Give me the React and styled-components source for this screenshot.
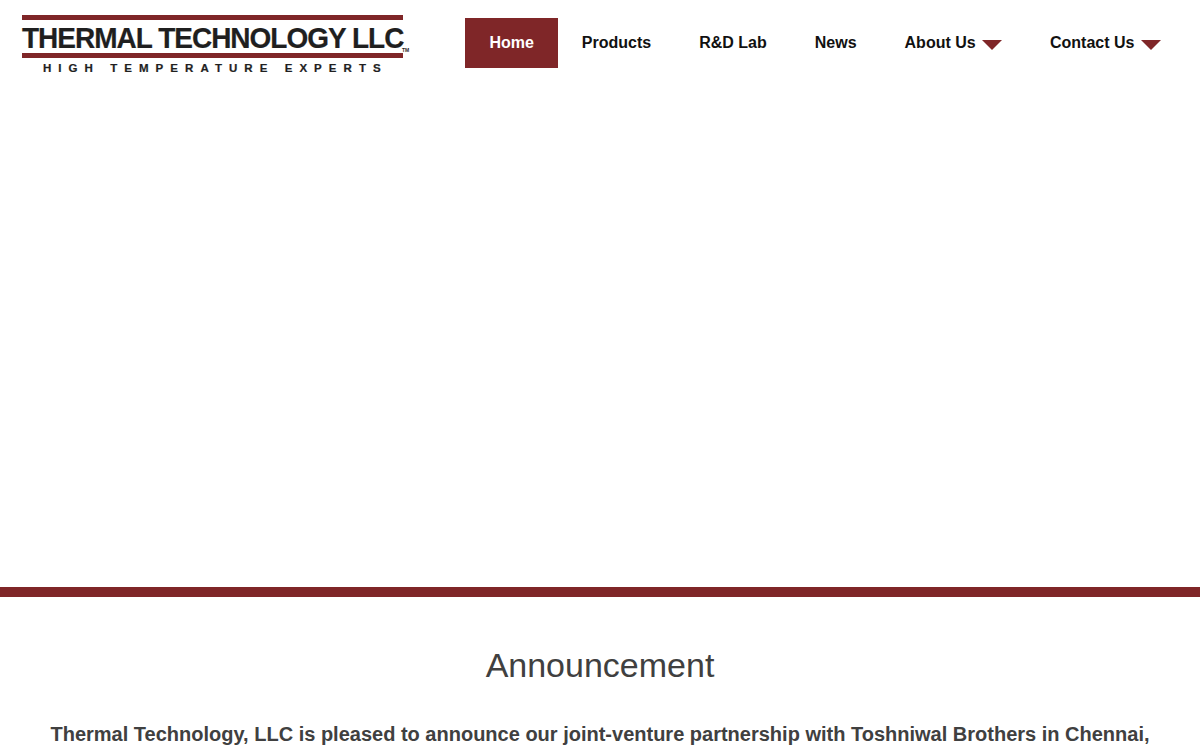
import React from "react";
import styled, { createGlobalStyle } from "styled-components";

const GlobalStyle = createGlobalStyle`
  html, body {
    margin: 0;
    padding: 0;
    background: #fff;
    font-family: "Liberation Sans", Arial, sans-serif;
  }
`;

const RED = "#7f2628";

const Header = styled.header`
  display: flex;
  align-items: flex-start;
  height: 587px;
  padding: 15px 0 0 22px;
  box-sizing: border-box;
`;

const Logo = styled.a`
  display: block;
  position: relative;
  width: 381px;
  margin-right: 62.4px;
  color: #1f1f1f;
  text-decoration: none;
`;

const LogoBar = styled.div`
  height: 5px;
  background: ${RED};
`;

const LogoName = styled.div`
  height: 33px;
  line-height: 36px;
  font-size: 28px;
  font-weight: 700;
  letter-spacing: -1px;
  white-space: nowrap;
  transform: scaleY(1.05);
  -webkit-text-stroke: 0.2px #1f1f1f;
`;

// extended letters, as in the logo artwork
const LogoTagline = styled.div`
  margin: 5px 0 0 21px;
  font-size: 10px;
  line-height: 11px;
  font-weight: 700;
  letter-spacing: 6.13px;
  white-space: nowrap;
  transform: scaleX(1.15);
  transform-origin: left center;
  -webkit-text-stroke: 0.2px #1f1f1f;
`;

const Trademark = styled.span`
  position: absolute;
  top: 33px;
  left: 380px;
  font-size: 5px;
  line-height: 5px;
  font-weight: 700;
`;

const Nav = styled.nav`
  display: flex;
  margin-top: 3px;
`;

const NavItem = styled.a`
  display: flex;
  align-items: center;
  gap: 6.3px;
  height: 50px;
  padding: 0 24px;
  font-size: 16px;
  font-weight: 700;
  color: ${(p) => (p.$active ? "#fff" : "#111")};
  background: ${(p) => (p.$active ? RED : "transparent")};
  cursor: pointer;
`;

const Caret = styled.span`
  width: 0;
  height: 0;
  margin-top: 3px;
  border-left: 10px solid transparent;
  border-right: 10px solid transparent;
  border-top: 10px solid ${RED};
`;

const Divider = styled.div`
  height: 10px;
  background: ${RED};
`;

const Announcement = styled.section`
  padding: 48px 0 0;
  text-align: center;
  color: #404040;
  height: 153px;
  box-sizing: border-box;
  overflow: hidden;
`;

const Title = styled.h2`
  margin: 0 0 35px;
  font-size: 34px;
  line-height: 40px;
  font-weight: 400;
`;

const Lead = styled.p`
  margin: 0;
  font-size: 20px;
  line-height: 28px;
  font-weight: 700;
`;

const links = [
  { label: "Home", active: true },
  { label: "Products" },
  { label: "R&D Lab" },
  { label: "News" },
  { label: "About Us", caret: true },
  { label: "Contact Us", caret: true },
];

export default function App() {
  return (
    <>
      <GlobalStyle />
      <Header>
        <Logo>
          <LogoBar />
          <LogoName>THERMAL TECHNOLOGY LLC</LogoName>
          <LogoBar />
          <LogoTagline>HIGH TEMPERATURE EXPERTS</LogoTagline>
          <Trademark>TM</Trademark>
        </Logo>
        <Nav>
          {links.map((link) => (
            <NavItem key={link.label} $active={link.active}>
              {link.label}
              {link.caret ? <Caret /> : null}
            </NavItem>
          ))}
        </Nav>
      </Header>
      <Divider />
      <Announcement>
        <Title>Announcement</Title>
        <Lead>
          Thermal Technology, LLC is pleased to announce our joint-venture partnership with Toshniwal Brothers in Chennai,
        </Lead>
      </Announcement>
    </>
  );
}
